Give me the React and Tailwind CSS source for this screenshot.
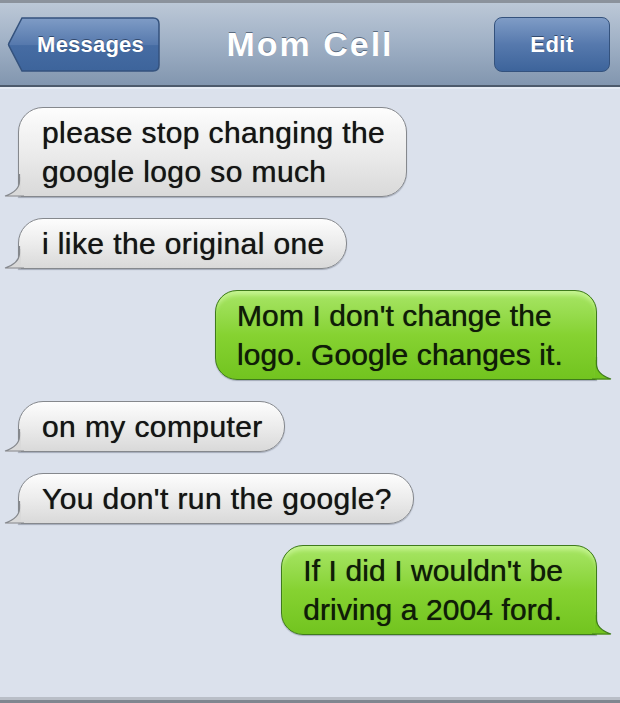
import React from 'react';

const messages = [
  { from: 'them', lines: ['please stop changing the', 'google logo so much'] },
  { from: 'them', lines: ['i like the original one'] },
  { from: 'me', lines: ["Mom I don't change the", 'logo. Google changes it.'] },
  { from: 'them', lines: ['on my computer'] },
  { from: 'them', lines: ["You don't run the google?"] },
  { from: 'me', lines: ["If I did I wouldn't be", 'driving a 2004 ford.'] },
];

function BackButton() {
  return (
    <div className="relative ml-[7px] flex h-[55px] w-[153px] items-center justify-center pl-[14px]">
      <svg className="absolute inset-0" width="153" height="55" viewBox="0 0 153 55">
        <defs>
          <linearGradient id="btn" x1="0" y1="0" x2="0" y2="1">
            <stop offset="0" stopColor="#7f9cc6" />
            <stop offset="0.5" stopColor="#5679ad" />
            <stop offset="0.52" stopColor="#466ca3" />
            <stop offset="1" stopColor="#3d649b" />
          </linearGradient>
        </defs>
        <path
          d="M15,1 L146,1 Q152,1 152,7 L152,48 Q152,54 146,54 L15,54 L2,29 Q1,27.5 2,26 Z"
          fill="url(#btn)"
          stroke="#34527d"
          strokeWidth="1.5"
        />
      </svg>
      <span className="relative text-[22px] font-bold tracking-[0.2px] text-white [text-shadow:0_-1px_0_rgba(30,50,80,0.7)]">
        Messages
      </span>
    </div>
  );
}

function Tail({ side, fill, stroke }) {
  if (side === 'them') {
    return (
      <svg className="absolute bottom-[-1px] left-[-15px]" width="20" height="23" viewBox="0 0 20 23">
        <path d="M17,3 L15.5,3 L15.5,7 C15.5,14 10,19 1,22.5 L17,22.5 Z" fill={fill} />
        <path d="M15.5,0 L15.5,7 C15.5,14 10,19 1,22 L20,22" fill="none" stroke={stroke} strokeWidth="1.2" />
      </svg>
    );
  }
  return (
    <svg className="absolute bottom-[-1px] right-[-16px]" width="20" height="23" viewBox="0 0 20 23">
      <path d="M3,3 L4.5,3 L4.5,7 C4.5,14 10,19 19,22.5 L3,22.5 Z" fill={fill} />
      <path d="M4.5,0 L4.5,7 C4.5,14 10,19 19,22 L0,22" fill="none" stroke={stroke} strokeWidth="1.2" />
    </svg>
  );
}

function Bubble({ from, lines }) {
  if (from === 'them') {
    return (
      <div className="flex justify-start pl-[18px]">
        <div className="relative rounded-[25px] rounded-bl-none border border-[#85888d] bg-linear-to-b from-[#fdfdfd] via-[#ececec] to-[#d9d9d9] py-[5px] pl-[23px] pr-[21px] text-[30px] leading-[39px] tracking-[0.4px] whitespace-nowrap text-[#141414] [text-shadow:0_0_0.7px_rgba(0,0,0,0.8)] shadow-[0_1px_1px_rgba(60,70,90,0.35)]">
          {lines.map((l, i) => (
            <div key={i}>{l}</div>
          ))}
          <Tail side="them" fill="#d9d9d9" stroke="#85888d" />
        </div>
      </div>
    );
  }
  return (
    <div className="flex justify-end pr-[23px]">
      <div className="relative rounded-[22px] rounded-br-none border border-[#3f7b1c] bg-linear-to-b from-[#a8e665] via-[#86d231] to-[#72c41f] py-[5px] pl-[21px] pr-[33px] text-[30px] leading-[39px] tracking-[0.1px] whitespace-nowrap text-[#101c08] [text-shadow:0_0_0.7px_rgba(0,0,0,0.8)] shadow-[inset_0_6px_4px_-2px_rgba(220,255,180,0.55),0_1px_1px_rgba(60,70,90,0.35)]">
        {lines.map((l, i) => (
          <div key={i}>{l}</div>
        ))}
        <Tail side="me" fill="#72c41f" stroke="#3f7b1c" />
      </div>
    </div>
  );
}

export default function App() {
  return (
    <div className="flex h-[703px] w-[620px] flex-col overflow-hidden bg-[#dbe1ec] font-['Liberation_Sans',Arial,sans-serif]">
      {/* nav bar */}
      <div className="h-[3px] bg-[#8b929c]" />
      <div className="grid h-[84px] grid-cols-[1fr_auto_1fr] items-center border-b-2 border-[#4d5a6b] bg-linear-to-b from-[#bcc8d7] via-[#9fb0c5] to-[#8296af]">
        <div className="flex justify-start">
          <BackButton />
        </div>
        <div className="px-2 text-[34px] font-bold tracking-[2px] text-white [text-shadow:0_-1px_0_rgba(40,55,75,0.6)]">
          Mom Cell
        </div>
        <div className="flex justify-end pr-[10px]">
          <div className="flex h-[55px] w-[116px] items-center justify-center rounded-[8px] border-[1.5px] border-[#34527d] bg-linear-to-b from-[#7f9cc6] via-[#5679ad] to-[#3d649b] text-[22px] font-bold tracking-[0.5px] text-white [text-shadow:0_-1px_0_rgba(30,50,80,0.7)]">
            Edit
          </div>
        </div>
      </div>
      <div className="h-[2px] bg-[#e6ebf3]" />

      {/* conversation */}
      <div className="flex flex-col gap-[21px] pt-[18px]">
        {messages.map((m, i) => (
          <Bubble key={i} {...m} />
        ))}
      </div>

      <div className="mt-auto h-[6px] border-t-[3px] border-[#b9bec7] bg-[#80868f]" />
    </div>
  );
}
